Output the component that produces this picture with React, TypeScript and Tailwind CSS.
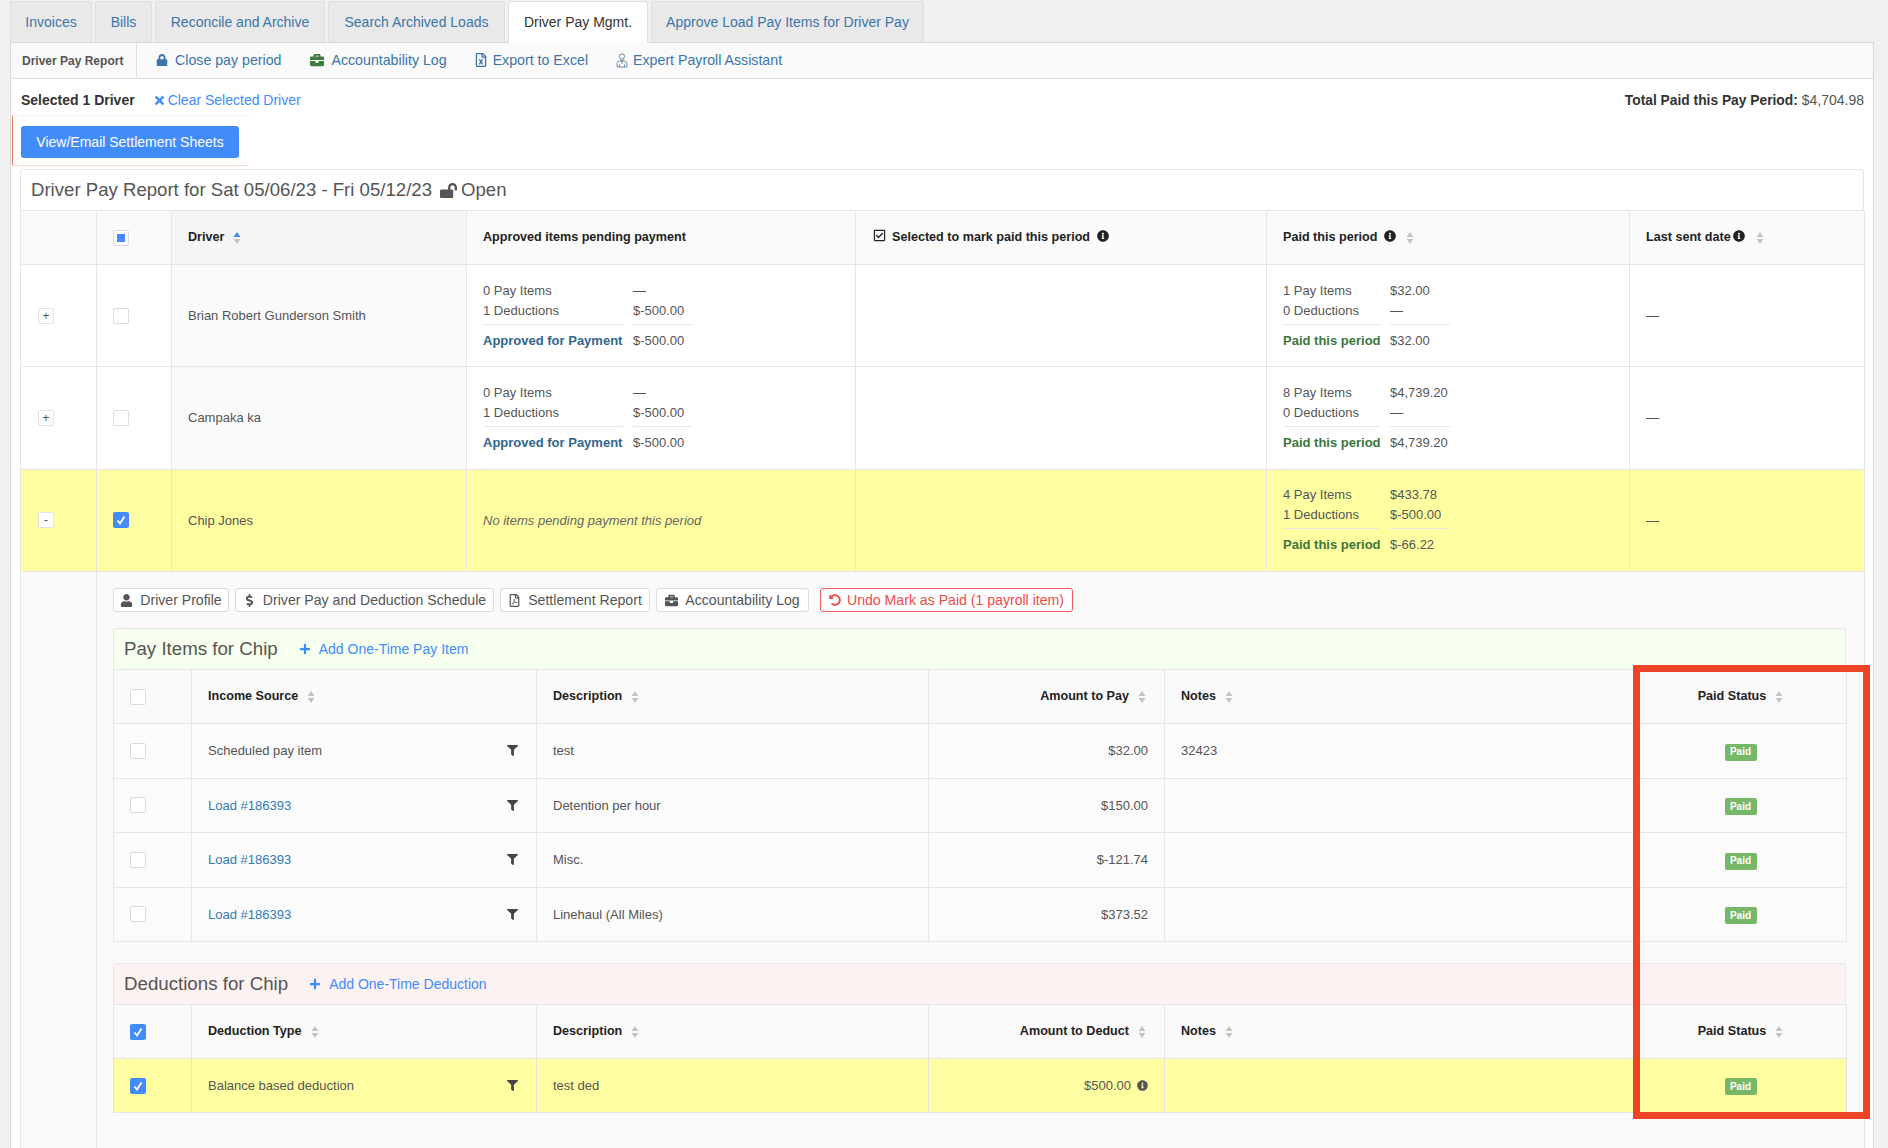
import type { ReactNode } from "react";
import {
  FaBriefcase,
  FaDollarSign,
  FaFilter,
  FaInfoCircle,
  FaLock,
  FaLockOpen,
  FaPlus,
  FaRegCheckSquare,
  FaRegFileExcel,
  FaRegFilePdf,
  FaTimes,
  FaUndoAlt,
  FaUser,
} from "react-icons/fa";

/* Small drawn pieces */

function SortArrows({ active = false }: { active?: boolean }) {
  return (
    <svg width="8" height="14" viewBox="0 0 8 14" className="ml-[9px] inline-block shrink-0 align-middle">
      <path d="M4 1 L7.5 6 L0.5 6 Z" fill={active ? "#3f8cff" : "#c4c4c4"} />
      <path d="M4 13 L7.5 8 L0.5 8 Z" fill="#c4c4c4" />
    </svg>
  );
}

function Checkbox({ state = "off" }: { state?: "off" | "on" | "mixed" }) {
  if (state === "on") {
    return (
      <span className="flex h-4 w-4 items-center justify-center rounded-[2px] bg-[#428cfa]">
        <svg width="10" height="10" viewBox="0 0 10 10">
          <path d="M1.5 5.5 L4 8.5 L8.5 1.5" fill="none" stroke="#fff" strokeWidth="1.8" />
        </svg>
      </span>
    );
  }
  return (
    <span className="flex h-4 w-4 items-center justify-center rounded-[2px] border border-[#dcdcdc] bg-white">
      {state === "mixed" && <span className="h-2 w-2 bg-[#428cfa]" />}
    </span>
  );
}

function PayrollIcon() {
  return (
    <svg width="12" height="15" viewBox="0 0 12 15" fill="none" stroke="#6f8ba5" strokeWidth="1">
      <circle cx="6" cy="3.5" r="2.6" />
      <path d="M4 6.5 L6 8 L8 6.5" />
      <path d="M1 14 V10.5 Q1 8.5 3.5 8 H8.5 Q11 8.5 11 10.5 V14 Z" />
      <path d="M6 8 V11 M3.5 14 V11.5 M8.5 14 V11.5" />
    </svg>
  );
}

function ExpandButton({ label }: { label: string }) {
  return (
    <span className="flex h-4 w-4 items-center justify-center rounded-[2px] border border-[#e2e2e2] bg-white text-[12px] leading-none text-[#555]">
      {label}
    </span>
  );
}

/* Pay report rows */

function Totals({
  rows,
  total,
  totalClass,
  labelClass,
}: {
  rows: [string, string][];
  total: [string, string];
  totalClass: string;
  labelClass: string;
}) {
  return (
    <div className={`grid gap-x-[10px] whitespace-nowrap ${labelClass}`}>
      {rows.map(([label, value]) => (
        <div key={label} className="contents">
          <span className="h-5 leading-5">{label}</span>
          <span className="h-5 leading-5">{value}</span>
        </div>
      ))}
      <span className="mt-[3px] h-[27px] border-t border-[#e8e8e8] pt-[6px] font-bold leading-5">
        <span className={totalClass}>{total[0]}</span>
      </span>
      <span className="mt-[3px] h-[27px] border-t border-[#e8e8e8] pt-[6px] leading-5">{total[1]}</span>
    </div>
  );
}

const pendingCols = "grid-cols-[140px_60px]";
const paidCols = "grid-cols-[97px_60px]";

function PendingTotals() {
  return (
    <Totals
      labelClass={pendingCols}
      rows={[
        ["0 Pay Items", "—"],
        ["1 Deductions", "$-500.00"],
      ]}
      total={["Approved for Payment", "$-500.00"]}
      totalClass="text-[#31678f]"
    />
  );
}

function DriverRow({
  name,
  open = false,
  pending,
  paid,
}: {
  name: string;
  open?: boolean;
  pending: ReactNode;
  paid: ReactNode;
}) {
  const rowBg = open ? "bg-[#ffffa1]" : "bg-white";
  return (
    <tr className={`h-[102.4px] ${rowBg}`}>
      <td className="border border-[#e6e6e6] pl-[17px]">
        <ExpandButton label={open ? "-" : "+"} />
      </td>
      <td className="border border-[#e6e6e6] pl-4">
        <Checkbox state={open ? "on" : "off"} />
      </td>
      <td className={`border border-[#e6e6e6] pl-4 ${open ? "" : "bg-[#fafafa]"}`}>{name}</td>
      <td className="border border-[#e6e6e6] pl-4">{pending}</td>
      <td className="border border-[#e6e6e6]" />
      <td className="border border-[#e6e6e6] pl-4">{paid}</td>
      <td className="border border-[#e6e6e6] pl-4">—</td>
    </tr>
  );
}

/* Nested tables */

function PaidBadge() {
  return (
    <span className="inline-flex h-[17px] w-[32px] items-center justify-center rounded-[2px] bg-[#76b768] text-[10px] font-bold leading-none text-white">
      Paid
    </span>
  );
}

type ItemRow = {
  source: string;
  isLink?: boolean;
  description: string;
  amount: string;
  notes?: string;
};

function ItemsTable({
  sourceTitle,
  amountTitle,
  allChecked,
  selected,
  rows,
}: {
  sourceTitle: string;
  amountTitle: string;
  allChecked?: boolean;
  selected?: boolean;
  rows: ItemRow[];
}) {
  const cell = "border border-[#e6e6e6]";
  return (
    <table className="w-[1733px] table-fixed border-collapse">
      <colgroup>
        <col className="w-[78px]" />
        <col className="w-[345px]" />
        <col className="w-[392px]" />
        <col className="w-[236px]" />
        <col className="w-[470px]" />
        <col className="w-[212px]" />
      </colgroup>
      <thead>
        <tr className="h-[54px] bg-[#fafafa] text-[12.6px] font-bold text-[#222]">
          <th className={`${cell} pl-4 text-left`}>
            <Checkbox state={allChecked ? "on" : "off"} />
          </th>
          <th className={`${cell} pl-4 text-left`}>
            {sourceTitle}
            <SortArrows />
          </th>
          <th className={`${cell} pl-4 text-left`}>
            Description
            <SortArrows />
          </th>
          <th className={`${cell} pr-[18px] text-right`}>
            {amountTitle}
            <SortArrows />
          </th>
          <th className={`${cell} pl-4 text-left`}>
            Notes
            <SortArrows />
          </th>
          <th className={`${cell} text-center font-bold`}>
            Paid Status
            <SortArrows />
          </th>
        </tr>
      </thead>
      <tbody>
        {rows.map((row, i) => (
          <tr key={i} className={selected ? "h-[54px] bg-[#ffffa1]" : "h-[54.5px] bg-[#fbfbfb]"}>
            <td className={`${cell} pl-4`}>
              <Checkbox state={selected ? "on" : "off"} />
            </td>
            <td className={`${cell} pl-4 pr-[18px]`}>
              <div className="flex items-center justify-between">
                <span className={row.isLink ? "text-[#337ab7]" : ""}>{row.source}</span>
                <FaFilter className="text-[11px] text-[#444]" />
              </div>
            </td>
            <td className={`${cell} pl-4`}>{row.description}</td>
            <td className={`${cell} pr-4 text-right`}>
              {row.amount}
              {selected && <FaInfoCircle className="ml-[6px] inline-block align-[-1px] text-[11px] text-[#555]" />}
            </td>
            <td className={`${cell} pl-4`}>{row.notes}</td>
            <td className={`${cell} text-center`}>
              <PaidBadge />
            </td>
          </tr>
        ))}
      </tbody>
    </table>
  );
}

function SectionHeading({ title, action, tint }: { title: string; action: string; tint: string }) {
  return (
    <div className={`flex h-[41px] items-center rounded-t-[3px] border border-b-0 border-[#e8e8e8] pl-[10px] ${tint}`}>
      <span className="text-[18.7px] text-[#555]">{title}</span>
      <span className="ml-[21px] flex items-center text-[14px] text-[#3f8cff]">
        <FaPlus className="mr-[8px] text-[12px]" />
        {action}
      </span>
    </div>
  );
}

function ActionButton({ icon, width, children }: { icon: ReactNode; width: string; children: ReactNode }) {
  return (
    <span
      className={`flex h-6 items-center justify-center gap-[7px] rounded-[3px] border border-[#dcdcdc] bg-white text-[14.1px] text-[#555] ${width}`}
    >
      {icon}
      {children}
    </span>
  );
}

export default function App() {
  const headCell = "border border-[#e6e6e6] pl-4 text-left text-[12.6px] font-bold text-[#222]";
  const idleTab =
    "flex items-center justify-center rounded-t-[3px] border border-b-0 border-[#dedede] bg-[#e9e9e9] text-[#3b76ab]";

  return (
    <div className="relative h-[1148px] overflow-hidden bg-[#f1f1f1] pl-[10px] pr-[14px] pt-px font-['Liberation_Sans',Arial,sans-serif] text-[13px] text-[#555]">
      {/* Tabs */}
      <div className="flex h-[41px] gap-[3px] text-[14px]">
        <span className={`${idleTab} w-[82px]`}>Invoices</span>
        <span className={`${idleTab} w-[57px]`}>Bills</span>
        <span className={`${idleTab} w-[170px]`}>Reconcile and Archive</span>
        <span className={`${idleTab} w-[177px]`}>Search Archived Loads</span>
        <span className="z-10 flex h-[42px] w-[140px] items-center justify-center rounded-t-[3px] border border-b-0 border-[#dedede] bg-white text-[#333]">
          Driver Pay Mgmt.
        </span>
        <span className={`${idleTab} w-[273px]`}>Approve Load Pay Items for Driver Pay</span>
      </div>

      <div className="h-[1106px] border-l border-r border-t border-[#d8d8d8] bg-white">
        {/* Sub navigation */}
        <div className="flex h-[36px] items-center border-b border-[#dedede] bg-[#fafafa] text-[14.2px] text-[#3b76ab]">
          <span className="flex h-full w-[126px] items-center border-r border-[#dedede] pl-[11px] text-[12px] font-bold text-[#555]">
            Driver Pay Report
          </span>
          <span className="ml-[19px] flex items-center">
            <FaLock className="mr-[7px] text-[12px] text-[#3f73ad]" />
            Close pay period
          </span>
          <span className="ml-[29px] flex items-center">
            <FaBriefcase className="mr-[7px] text-[14px] text-[#3f7a3f]" />
            Accountability Log
          </span>
          <span className="ml-[27px] flex items-center">
            <FaRegFileExcel className="mr-[5px] text-[14px] text-[#3b76ab]" />
            Export to Excel
          </span>
          <span className="ml-[28px] flex items-center">
            <span className="mr-[5px] flex">
              <PayrollIcon />
            </span>
            Expert Payroll Assistant
          </span>
        </div>

        {/* Selection summary */}
        <div className="flex h-[36px] items-center justify-between pl-[10px] pr-[9px] pt-[7px] text-[14px]">
          <div className="flex items-center">
            <span className="font-bold text-[#333]">Selected 1 Driver</span>
            <span className="ml-[18px] flex items-center text-[#3f8cff]">
              <FaTimes className="mr-[2px] text-[13px]" />
              Clear Selected Driver
            </span>
          </div>
          <div>
            <span className="text-[13.8px] font-bold text-[#333]">Total Paid this Pay Period:</span> $4,704.98
          </div>
        </div>

        <div className="ml-[1px] h-[51px] w-[237px] border-b border-l border-t border-b-[#f6d6cd] border-l-[#ee7f68] border-t-[#fdf0ee] pl-[8px] pt-[10px]">
          <span className="flex h-8 w-[218px] items-center justify-center rounded-[3px] bg-[#428cfa] text-[14px] text-white">
            View/Email Settlement Sheets
          </span>
        </div>

        {/* Report panel */}
        <div className="ml-[9px] mt-[3px] w-[1844px]">
          <div className="flex h-[41px] items-center rounded-t-[3px] border border-b-0 border-[#e6e6e6] bg-white pl-[10px] text-[18.6px] text-[#555]">
            Driver Pay Report for Sat 05/06/23 - Fri 05/12/23
            <FaLockOpen className="ml-2 mr-1 text-[17px] text-[#555]" />
            Open
          </div>
          <table className="w-[1844px] table-fixed border-collapse">
            <colgroup>
              <col className="w-[76px]" />
              <col className="w-[75px]" />
              <col className="w-[295px]" />
              <col className="w-[389px]" />
              <col className="w-[411px]" />
              <col className="w-[363px]" />
              <col className="w-[235px]" />
            </colgroup>
            <thead>
              <tr className="h-[54px] bg-[#fafafa]">
                <th className="border border-[#e6e6e6]" />
                <th className="border border-[#e6e6e6] pl-4 text-left">
                  <Checkbox state="mixed" />
                </th>
                <th className={`${headCell} bg-[#f5f5f5]`}>
                  Driver
                  <SortArrows active />
                </th>
                <th className={headCell}>Approved items pending payment</th>
                <th className={headCell}>
                  <FaRegCheckSquare className="ml-px mr-[6px] inline-block align-[-1px] text-[13px]" />
                  Selected to mark paid this period
                  <FaInfoCircle className="ml-[7px] inline-block align-[-1px] text-[12px]" />
                </th>
                <th className={headCell}>
                  Paid this period
                  <FaInfoCircle className="ml-[7px] mr-px inline-block align-[-1px] text-[12px]" />
                  <SortArrows />
                </th>
                <th className={headCell}>
                  Last sent date
                  <FaInfoCircle className="ml-[2px] mr-[2px] inline-block align-[-1px] text-[12px]" />
                  <SortArrows />
                </th>
              </tr>
            </thead>
            <tbody>
              <DriverRow
                name="Brian Robert Gunderson Smith"
                pending={<PendingTotals />}
                paid={
                  <Totals
                    labelClass={paidCols}
                    rows={[
                      ["1 Pay Items", "$32.00"],
                      ["0 Deductions", "—"],
                    ]}
                    total={["Paid this period", "$32.00"]}
                    totalClass="text-[#3c763d]"
                  />
                }
              />
              <DriverRow
                name="Campaka ka"
                pending={<PendingTotals />}
                paid={
                  <Totals
                    labelClass={paidCols}
                    rows={[
                      ["8 Pay Items", "$4,739.20"],
                      ["0 Deductions", "—"],
                    ]}
                    total={["Paid this period", "$4,739.20"]}
                    totalClass="text-[#3c763d]"
                  />
                }
              />
              <DriverRow
                name="Chip Jones"
                open
                pending={<em className="text-[#666]">No items pending payment this period</em>}
                paid={
                  <Totals
                    labelClass={paidCols}
                    rows={[
                      ["4 Pay Items", "$433.78"],
                      ["1 Deductions", "$-500.00"],
                    ]}
                    total={["Paid this period", "$-66.22"]}
                    totalClass="text-[#3c763d]"
                  />
                }
              />

              {/* Expanded driver */}
              <tr className="bg-[#fafafa]">
                <td className="border border-[#e6e6e6]" />
                <td colSpan={6} className="h-[600px] border border-[#e6e6e6] pl-4 pt-[16px] align-top">
                  <div className="flex gap-[6px]">
                    <ActionButton width="w-[116px]" icon={<FaUser className="text-[13px]" />}>
                      Driver Profile
                    </ActionButton>
                    <ActionButton width="w-[259px]" icon={<FaDollarSign className="text-[13px]" />}>
                      Driver Pay and Deduction Schedule
                    </ActionButton>
                    <ActionButton width="w-[150px]" icon={<FaRegFilePdf className="text-[13px]" />}>
                      Settlement Report
                    </ActionButton>
                    <ActionButton width="w-[153px]" icon={<FaBriefcase className="text-[13px]" />}>
                      Accountability Log
                    </ActionButton>
                    <span className="ml-[5px] flex h-6 w-[253px] items-center justify-center gap-[6px] rounded-[3px] border border-[#f05a55] bg-white text-[14.1px] text-[#ee4b47]">
                      <FaUndoAlt className="text-[12px]" />
                      Undo Mark as Paid (1 payroll item)
                    </span>
                  </div>

                  <div className="mt-[16px] w-[1733px]">
                    <SectionHeading title="Pay Items for Chip" action="Add One-Time Pay Item" tint="bg-[#f7ffee]" />
                    <ItemsTable
                      sourceTitle="Income Source"
                      amountTitle="Amount to Pay"
                      rows={[
                        { source: "Scheduled pay item", description: "test", amount: "$32.00", notes: "32423" },
                        { source: "Load #186393", isLink: true, description: "Detention per hour", amount: "$150.00" },
                        { source: "Load #186393", isLink: true, description: "Misc.", amount: "$-121.74" },
                        { source: "Load #186393", isLink: true, description: "Linehaul (All Miles)", amount: "$373.52" },
                      ]}
                    />
                  </div>

                  <div className="mt-[21px] w-[1733px]">
                    <SectionHeading title="Deductions for Chip" action="Add One-Time Deduction" tint="bg-[#fdf2f2]" />
                    <ItemsTable
                      sourceTitle="Deduction Type"
                      amountTitle="Amount to Deduct"
                      allChecked
                      selected
                      rows={[{ source: "Balance based deduction", description: "test ded", amount: "$500.00" }]}
                    />
                  </div>
                </td>
              </tr>
            </tbody>
          </table>
        </div>
      </div>

      {/* Red annotation drawn over the screenshot */}
      <div className="absolute left-[1633px] top-[665px] h-[454px] w-[237px] border-[7px] border-[#ee4326]" />
    </div>
  );
}
